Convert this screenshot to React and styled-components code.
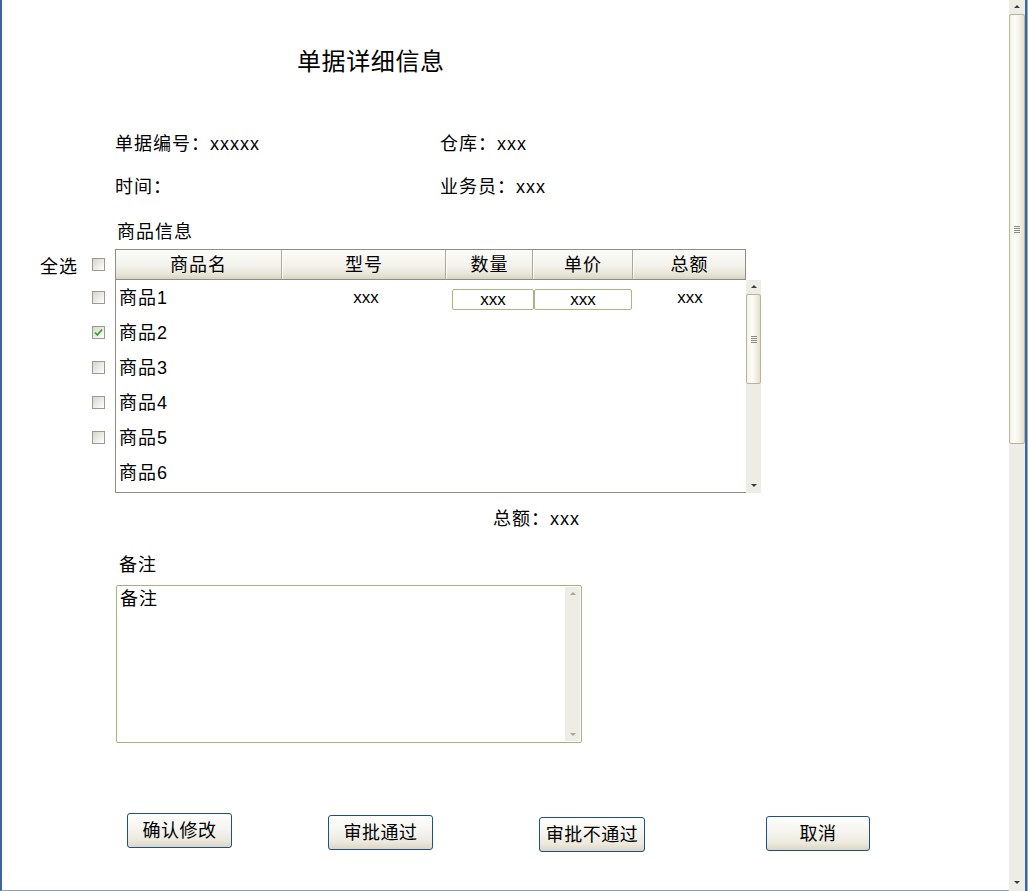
import React from "react"
import styled, { createGlobalStyle } from "styled-components"

const GlobalStyle = createGlobalStyle`
  html, body {
    margin: 0;
    padding: 0;
    background: #fff;
    overflow: hidden;
  }
  body {
    font-family: "Liberation Sans", "Noto Sans CJK SC", sans-serif;
    font-size: 18px;
    color: #000;
  }
  * { box-sizing: border-box; }
`

const Window = styled.div`
  display: flex;
  width: 1028px;
  height: 891px;
  background: #fff;
`
const Frame = styled.div`
  flex: 1;
  display: flex;
  flex-direction: column;
  align-items: flex-start;
  padding: 47px 0 0 38px;
  border-left: 2px solid #3a689c;
  border-bottom: 1px solid #8aa4c0;
`
const RightEdge = styled.div`
  width: 3px;
  background: linear-gradient(to right, #3a689c 0 2px, #8fb0d4 2px);
`
const Title = styled.h1`
  margin: 0 0 0 257px;
  font-size: 24px;
  font-weight: normal;
  line-height: 30px;
  letter-spacing: 0.6px;
`
const InfoGrid = styled.div`
  display: grid;
  grid-template-columns: 325px 200px;
  row-gap: 19px;
  margin: 55px 0 0 75px;
  line-height: 24px;
  letter-spacing: 1px;
`
const Label = styled.div`
  margin: ${p => p.$top}px 0 0 ${p => p.$left}px;
  line-height: 24px;
  letter-spacing: ${p => (p.$spaced ? 1 : 0)}px;
`

/* goods table */
const TableArea = styled.div`
  display: flex;
  margin-top: 5px;
`
const SelectColumn = styled.div`
  display: flex;
  flex-direction: column;
  width: 65px;
  margin-right: 10px;
`
const SelectAll = styled.div`
  height: 31px;
  display: flex;
  align-items: center;
  justify-content: space-between;
  letter-spacing: 1px;
`
const SelectRow = styled.div`
  height: 35px;
  display: flex;
  align-items: center;
  justify-content: flex-end;
`
const Box = styled.span`
  width: 13px;
  height: 13px;
  border: 1px solid #9c9a8f;
  background: linear-gradient(135deg, #d6d5cc 0%, #f3f3ef 70%, #fff 100%);
  display: flex;
  align-items: center;
  justify-content: center;
`
const GoodsTable = styled.div`
  display: grid;
  grid-template-columns: 631px 15px;
  grid-template-rows: 31px 213px;
`
const HeaderRow = styled.div`
  display: grid;
  grid-template-columns: 166px 164px 87px 100px 112px;
  border: 1px solid #8f8d85;
`
const HeaderCell = styled.div`
  display: flex;
  align-items: center;
  justify-content: center;
  line-height: 24px;
  letter-spacing: 1px;
  background: linear-gradient(to bottom, #fcfcfa 0%, #f3f2eb 55%, #e9e6d8 82%, #d9d4c2 100%);
  border-left: 1px solid #fff;
  border-right: 1px solid #aca899;
  &:first-child { border-left: none; }
  &:last-child { border-right: none; }
`
const Corner = styled.div`
  background: #fff;
`
const Body = styled.div`
  display: flex;
  flex-direction: column;
  border-left: 1px solid #8f8d85;
  border-bottom: 1px solid #8f8d85;
  background: #fff;
`
const BodyRow = styled.div`
  display: grid;
  grid-template-columns: 165px 164px 87px 100px 114px;
  height: 35px;
  align-items: center;
`
const NameCell = styled.div`
  padding-left: 3px;
  line-height: 24px;
  letter-spacing: 1px;
`
const ValueCell = styled.div`
  text-align: center;
  font-size: 17px;
  padding-left: ${p => p.$pad || 0}px;
  line-height: 24px;
`
const InputCell = styled.div`
  align-self: start;
  padding-top: 9px;
  display: flex;
`
const CellInput = styled.input`
  flex: none;
  width: ${p => p.$w}px;
  height: 21px;
  margin-left: ${p => p.$ml}px;
  padding: 0;
  border: 1px solid #a4b97f;
  border-radius: 2px;
  font-family: inherit;
  font-size: 17px;
  text-align: center;
  outline: none;
  background: #fff;
`

/* scrollbars */
const ScrollTrack = styled.div`
  display: flex;
  flex-direction: column;
  align-items: stretch;
  width: ${p => p.$w}px;
  background: #eeede5;
`
const Arrow = styled.div`
  flex: none;
  height: ${p => p.$h}px;
  display: flex;
  align-items: center;
  justify-content: center;
  &::after {
    content: "";
    border-left: 3px solid transparent;
    border-right: 3px solid transparent;
    ${p => (p.$down ? "border-top" : "border-bottom")}: 3px solid ${p => (p.$dim ? "#a9a797" : "#3c3c3c")};
  }
`
const Thumb = styled.div`
  flex: none;
  height: ${p => p.$h}px;
  margin-top: ${p => p.$top}px;
  border: 1px solid #b7b39f;
  border-radius: 2px;
  background: linear-gradient(to right, #f4f2e8 0%, #fdfcf6 35%, #f2f0e5 70%, #e2dfce 100%);
  display: flex;
  align-items: center;
  justify-content: center;
`
const Grip = styled.span`
  width: 6px;
  height: 7px;
  background: repeating-linear-gradient(to bottom, #8e8b7c 0 1px, transparent 1px 2px);
`
const Spacer = styled.div`
  flex: 1;
`

/* bottom part */
const NoteBox = styled.div`
  display: flex;
  width: 466px;
  height: 158px;
  margin: 8px 0 0 76px;
  padding: 1px 1px 1px 0;
  border: 1px solid #a0b47c;
  border-radius: 2px;
`
const NoteText = styled.textarea`
  flex: 1;
  border: none;
  resize: none;
  outline: none;
  overflow: hidden;
  padding: 0 3px;
  font-family: inherit;
  font-size: 18px;
  line-height: 24px;
  letter-spacing: 1px;
  background: transparent;
`
const ButtonRow = styled.div`
  display: flex;
  align-items: flex-start;
  margin-top: 70px;
`
const ActionButton = styled.button`
  width: ${p => p.$w}px;
  height: 35px;
  margin: ${p => p.$drop}px 0 0 ${p => p.$gap}px;
  padding: 0;
  border: 1px solid #1f4f84;
  border-radius: 3px;
  background: linear-gradient(to bottom, #fefefd 0%, #f5f4ef 45%, #ece9de 78%, #dcd6c4 100%);
  font-family: inherit;
  font-size: 18px;
  letter-spacing: 0.5px;
  color: #000;
  line-height: 24px;
`

const CheckBox = ({ checked }) => (
  <Box>
    {checked && (
      <svg width="9" height="9" viewBox="0 0 9 9">
        <path d="M1 4.5 L3.4 7 L8 1.5" stroke="#2fa32f" strokeWidth="1.8" fill="none" />
      </svg>
    )}
  </Box>
)

const columns = ["商品名", "型号", "数量", "单价", "总额"]
const goods = ["商品1", "商品2", "商品3", "商品4", "商品5", "商品6"]
const checks = [false, true, false, false, false]
const buttons = [
  { label: "确认修改", gap: 87, w: 105, drop: 0 },
  { label: "审批通过", gap: 96, w: 105, drop: 2 },
  { label: "审批不通过", gap: 106, w: 106, drop: 4 },
  { label: "取消", gap: 121, w: 104, drop: 3 },
]

const App = () => {
  return (
    <Window>
      <GlobalStyle />
      <Frame>
        <Title>单据详细信息</Title>
        <InfoGrid>
          <div>单据编号：xxxxx</div>
          <div>仓库：xxx</div>
          <div>时间：</div>
          <div>业务员：xxx</div>
        </InfoGrid>
        <Label $top={21} $left={77} $spaced>商品信息</Label>

        <TableArea>
          <SelectColumn>
            <SelectAll>
              <span>全选</span>
              <CheckBox />
            </SelectAll>
            {checks.map((c, i) => (
              <SelectRow key={i}>
                <CheckBox checked={c} />
              </SelectRow>
            ))}
          </SelectColumn>

          <GoodsTable>
            <HeaderRow>
              {columns.map(c => (
                <HeaderCell key={c}>{c}</HeaderCell>
              ))}
            </HeaderRow>
            <Corner />
            <Body>
              {goods.map((g, i) => (
                <BodyRow key={g}>
                  <NameCell>{g}</NameCell>
                  {i === 0 && (
                    <>
                      <ValueCell $pad={6}>xxx</ValueCell>
                      <InputCell>
                        <CellInput $w={82} $ml={7} value="xxx" readOnly />
                      </InputCell>
                      <InputCell>
                        <CellInput $w={98} $ml={2} value="xxx" readOnly />
                      </InputCell>
                      <ValueCell $pad={2}>xxx</ValueCell>
                    </>
                  )}
                </BodyRow>
              ))}
            </Body>
            <ScrollTrack $w={15}>
              <Arrow $h={12} />
              <Thumb $top={2} $h={90}>
                <Grip />
              </Thumb>
              <Spacer />
              <Arrow $h={16} $down />
            </ScrollTrack>
          </GoodsTable>
        </TableArea>

        <Label $top={14} $left={453} $spaced>总额：xxx</Label>
        <Label $top={22} $left={79} $spaced>备注</Label>
        <NoteBox>
          <NoteText defaultValue="备注" />
          <ScrollTrack $w={15}>
            <Arrow $h={12} $dim />
            <Spacer />
            <Arrow $h={14} $down $dim />
          </ScrollTrack>
        </NoteBox>

        <ButtonRow>
          {buttons.map(b => (
            <ActionButton key={b.label} $w={b.w} $gap={b.gap} $drop={b.drop}>
              {b.label}
            </ActionButton>
          ))}
        </ButtonRow>
      </Frame>

      <ScrollTrack $w={16}>
        <Arrow $h={13} />
        <Thumb $top={1} $h={430}>
          <Grip />
        </Thumb>
        <Spacer />
        <Arrow $h={18} $down />
      </ScrollTrack>
      <RightEdge />
    </Window>
  )
}

export default App
